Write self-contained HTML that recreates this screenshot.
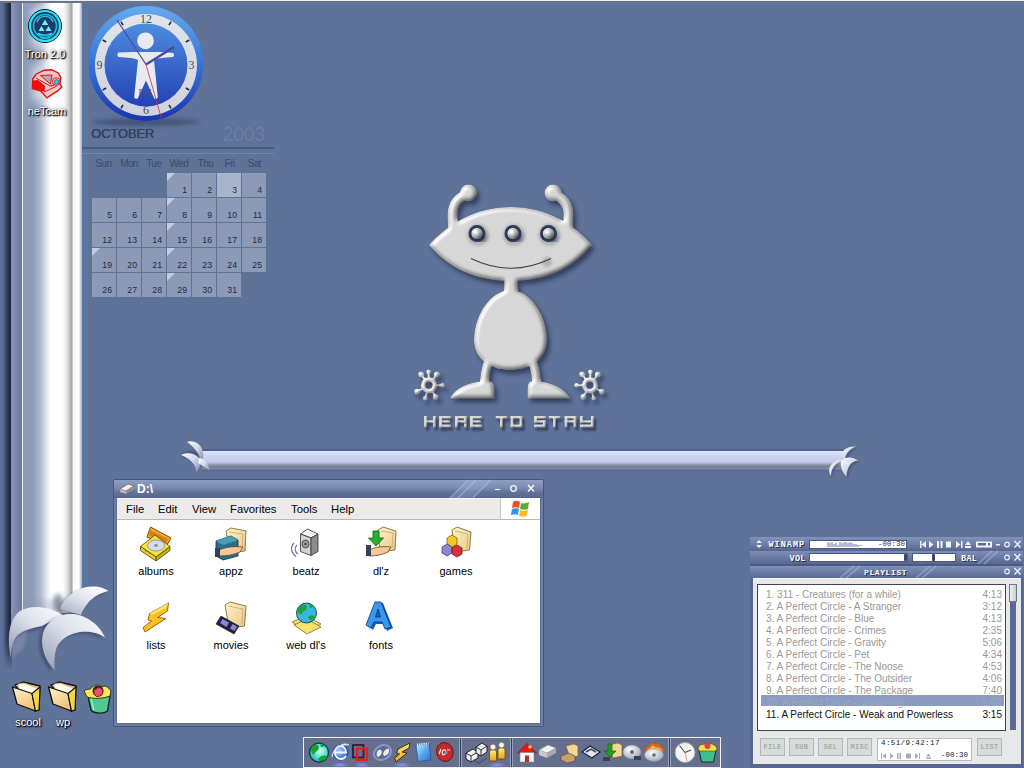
<!DOCTYPE html>
<html><head><meta charset="utf-8"><style>
*{margin:0;padding:0;box-sizing:border-box}
html,body{width:1024px;height:768px;overflow:hidden}
body{background:#5f7298;font-family:"Liberation Sans",sans-serif;position:relative}
.a{position:absolute}
</style></head><body>
<!-- left bar -->
<div class="a" style="left:0;top:1px;width:12px;height:640px;background:linear-gradient(90deg,#5f749c 0,#5a6c94 3px,#2a3450 8px,#1c2438 11px)"></div>
<div class="a" style="left:0;top:640px;width:12px;height:30px;background:linear-gradient(90deg,#5f749c 0,#5a6c94 3px,#2a3450 8px,#1c2438 11px);-webkit-mask-image:linear-gradient(#000,transparent)"></div>
<div class="a" style="left:11px;top:1px;width:11px;height:625px;background:linear-gradient(90deg,#8c94b4,#6a78a0)"></div>
<div class="a" style="left:22px;top:1px;width:1px;height:612px;background:#e8f4ff"></div>
<div class="a" style="left:23px;top:1px;width:59px;height:612px;background:linear-gradient(90deg,#8a9cb8 0,#8e9eba 10px,#b4bcd0 18px,#e4e8f0 24px,#ffffff 28px,#ffffff 40px,#d8d8d8 45px,#a0a0a0 49px,#f8f8f8 50px,#ffffff 56px,#c0c0c8 58px,#a8a8b8 59px)"></div>
<!-- top edge -->
<div class="a" style="left:0;top:0;width:1024px;height:1px;background:#eceef4"></div>
<div class="a" style="left:0;top:1px;width:1024px;height:2px;background:#6c7388"></div>
<div class="a" style="left:82px;top:3px;width:942px;height:6px;background:linear-gradient(#5a76a0,#5f7298)"></div>
<div class="a" style="left:82px;top:3px;width:8px;height:600px;background:linear-gradient(90deg,#5878a2,#5f7298)"></div>
<!-- crescents -->
<svg class="a" style="left:0;top:560px" width="120" height="120" viewBox="0 560 120 120">
<defs>
<linearGradient id="cg1" x1="0.9" y1="0" x2="0" y2="0.9"><stop offset="0" stop-color="#f8f9fc"/><stop offset="0.45" stop-color="#dde1ea"/><stop offset="1" stop-color="#98a0b6"/></linearGradient>
<linearGradient id="cg2" x1="0.9" y1="0" x2="0.1" y2="1"><stop offset="0" stop-color="#ffffff"/><stop offset="0.5" stop-color="#dfe3ec"/><stop offset="1" stop-color="#a4acc0"/></linearGradient>
<filter id="cblur" x="-50%" y="-50%" width="200%" height="200%"><feGaussianBlur stdDeviation="2.5"/></filter>
<filter id="cblur2" x="-50%" y="-50%" width="200%" height="200%"><feGaussianBlur stdDeviation="1.5"/></filter>
</defs>
<!-- bar bottom shadow -->
<ellipse cx="58" cy="604" rx="5" ry="10" fill="#404860" opacity="0.6" filter="url(#cblur)"/><rect x="23" y="600" width="59" height="14" fill="#8890a8" opacity="0.25" filter="url(#cblur)"/>
<!-- c2 top right -->
<path d="M63 613 C60 610 60 606 61 606 C64 596 78 587 91 586.5 C99 586 104 588 108.5 591 C100 593 93 597 88 603 C85 607 82 611 81 615 Z" fill="#2a3450" opacity="0.35" filter="url(#cblur2)" transform="translate(-2,2)"/>
<path d="M60 609 C64 597 78 587 91 586.5 C99 586 104 588 108.5 591 C100 593 93 597 88 603 C85 607 82 611 81 615 Z" fill="url(#cg2)"/>
<!-- c1 left -->
<path d="M11 658 C7 640 8 620 20 611 C28 606 44 604 63 615 C55 619 48 623 42 626 C32 628 24 630 18 635 C13 640 11 648 11 658 Z" fill="#2a3450" opacity="0.45" filter="url(#cblur2)" transform="translate(-1,3)"/>
<path d="M11 658 C7 640 8 620 20 611 C28 606 44 604 63 615 C55 619 48 623 42 626 C32 628 24 630 18 635 C13 640 11 648 11 658 Z" fill="url(#cg1)"/>
<path d="M11 645 C14 638 20 632 28 630 L24 648 C18 652 14 656 12 661 Z" fill="#8a94b0" opacity="0.55" filter="url(#cblur2)"/>
<!-- c3 front -->
<path d="M54.7 670 C44 660 40 645 43 633 C47 620 60 613 73 614 C86 615 100 625 105 637.5 C97 632 88 631 80 632 C68 634 60 640 56.5 648 C54 655 54 663 54.7 670 Z" fill="#2a3450" opacity="0.5" filter="url(#cblur2)" transform="translate(-3,2)"/>
<path d="M54.7 670 C44 660 40 645 43 633 C47 620 60 613 73 614 C86 615 100 625 105 637.5 C97 632 88 631 80 632 C68 634 60 640 56.5 648 C54 655 54 663 54.7 670 Z" fill="url(#cg1)"/>
</svg>
<!-- clock -->
<svg class="a" style="left:80px;top:0" width="140" height="130" viewBox="80 0 140 130">
<defs>
<linearGradient id="clkout" x1="0" y1="0" x2="0" y2="1"><stop offset="0" stop-color="#64aaf0"/><stop offset="0.45" stop-color="#3a7ad8"/><stop offset="1" stop-color="#1a34b0"/></linearGradient>
<linearGradient id="clkin" x1="0" y1="0" x2="0" y2="1"><stop offset="0" stop-color="#4e8cde"/><stop offset="1" stop-color="#2442b6"/></linearGradient>
<linearGradient id="clkring" x1="0" y1="0" x2="0" y2="1"><stop offset="0" stop-color="#e2e4ec"/><stop offset="1" stop-color="#cfd2dc"/></linearGradient>
<filter id="shblur" x="-20%" y="-200%" width="140%" height="500%"><feGaussianBlur stdDeviation="2.2"/></filter>
</defs>
<ellipse cx="146" cy="122" rx="54" ry="3.5" fill="#2c3a5c" opacity="0.55" filter="url(#shblur)"/>
<circle cx="146" cy="63.5" r="57.5" fill="url(#clkout)"/>
<circle cx="146" cy="65" r="51" fill="url(#clkring)"/>
<circle cx="146" cy="65" r="41.5" fill="url(#clkin)"/>
<g stroke="#28283a" stroke-width="1.6">
<line x1="171" y1="21.7" x2="169" y2="25.2"/>
<line x1="189.3" y1="40" x2="185.8" y2="42"/>
<line x1="189.3" y1="90" x2="185.8" y2="88"/>
<line x1="171" y1="108.3" x2="169" y2="104.8"/>
<line x1="121" y1="108.3" x2="123" y2="104.8"/>
<line x1="102.7" y1="90" x2="106.2" y2="88"/>
<line x1="102.7" y1="40" x2="106.2" y2="42"/>
<line x1="121" y1="21.7" x2="123" y2="25.2"/>
</g>
<g font-family="Liberation Serif" font-size="12" fill="#4a4a58" text-anchor="middle">
<text x="146" y="23">12</text>
<text x="191.5" y="69">3</text>
<text x="146" y="114">6</text>
<text x="99.5" y="69">9</text>
</g>
<g fill="#e8eaf2">
<circle cx="145.5" cy="40.8" r="8.4"/>
<path d="M118.5 52.5 C130 51.5 138 52 146 52 C154 52 162 51.5 173 53 C174.5 54 174.5 56 173 57 C164 57.5 158 58 154 60 L157.8 97 C157.8 99 154 99.5 153.8 97.5 L146 80.5 L138.2 97.5 C138 99.5 134.2 99 134.2 97 L138 60 C134 58 128 57.5 118.5 57 C117 56 117 53.5 118.5 52.5 Z"/>
</g>
<text x="145" y="95" font-family="Liberation Serif" font-size="9" fill="#4a4e88" text-anchor="middle">PM</text>
<line x1="146" y1="64.5" x2="174" y2="47" stroke="#4c46a0" stroke-width="2.2"/>
<line x1="146" y1="64.5" x2="117" y2="20" stroke="#4c4c9c" stroke-width="1.3"/>
<line x1="146" y1="64.5" x2="161" y2="117" stroke="#d82848" stroke-width="0.8"/>
</svg>
<!-- calendar -->
<div class="a" style="left:91px;top:125.8px;font-size:12.8px;color:#34405e;text-shadow:0.5px 0 0 #34405e">OCTOBER</div>
<div class="a" style="left:222.5px;top:122.5px;font-size:20px;color:#7080a2;letter-spacing:-0.6px;text-shadow:0 0 1px #52648c">2003</div>
<div class="a" style="left:82px;top:147px;width:192px;height:2px;background:#4a5a7c"></div>
<div class="a" style="left:82px;top:153px;width:192px;height:1px;background:#7484a6"></div>
<div class="a" style="left:88.5px;top:158px;width:30px;text-align:center;font-size:10px;letter-spacing:-0.6px;color:#3c4a6a">Sun</div>
<div class="a" style="left:114px;top:158px;width:30px;text-align:center;font-size:10px;letter-spacing:-0.6px;color:#3c4a6a">Mon</div>
<div class="a" style="left:138.7px;top:158px;width:30px;text-align:center;font-size:10px;letter-spacing:-0.6px;color:#3c4a6a">Tue</div>
<div class="a" style="left:163.9px;top:158px;width:30px;text-align:center;font-size:10px;letter-spacing:-0.6px;color:#3c4a6a">Wed</div>
<div class="a" style="left:190.4px;top:158px;width:30px;text-align:center;font-size:10px;letter-spacing:-0.6px;color:#3c4a6a">Thu</div>
<div class="a" style="left:214.5px;top:158px;width:30px;text-align:center;font-size:10px;letter-spacing:-0.6px;color:#3c4a6a">Fri</div>
<div class="a" style="left:239.4px;top:158px;width:30px;text-align:center;font-size:10px;letter-spacing:-0.6px;color:#3c4a6a">Sat</div>
<div class="a" style="left:167px;top:173px;width:24px;height:24px;background:#8c9ab8"><div class="a" style="left:0;top:0;width:0;height:0;border-top:8px solid #c4cce0;border-right:8px solid transparent"></div><div class="a" style="right:4px;top:11.5px;font-size:8.7px;color:#1f2a40">1</div></div>
<div class="a" style="left:192px;top:173px;width:24px;height:24px;background:#8c9ab8"><div class="a" style="right:4px;top:11.5px;font-size:8.7px;color:#1f2a40">2</div></div>
<div class="a" style="left:217px;top:173px;width:24px;height:24px;background:#a8b4ca"><div class="a" style="right:4px;top:11.5px;font-size:8.7px;color:#1f2a40">3</div></div>
<div class="a" style="left:242px;top:173px;width:24px;height:24px;background:#8c9ab8"><div class="a" style="right:4px;top:11.5px;font-size:8.7px;color:#1f2a40">4</div></div>
<div class="a" style="left:92px;top:198px;width:24px;height:24px;background:#8c9ab8"><div class="a" style="right:4px;top:11.5px;font-size:8.7px;color:#1f2a40">5</div></div>
<div class="a" style="left:117px;top:198px;width:24px;height:24px;background:#8c9ab8"><div class="a" style="right:4px;top:11.5px;font-size:8.7px;color:#1f2a40">6</div></div>
<div class="a" style="left:142px;top:198px;width:24px;height:24px;background:#8c9ab8"><div class="a" style="right:4px;top:11.5px;font-size:8.7px;color:#1f2a40">7</div></div>
<div class="a" style="left:167px;top:198px;width:24px;height:24px;background:#8c9ab8"><div class="a" style="left:0;top:0;width:0;height:0;border-top:8px solid #c4cce0;border-right:8px solid transparent"></div><div class="a" style="right:4px;top:11.5px;font-size:8.7px;color:#1f2a40">8</div></div>
<div class="a" style="left:192px;top:198px;width:24px;height:24px;background:#8c9ab8"><div class="a" style="right:4px;top:11.5px;font-size:8.7px;color:#1f2a40">9</div></div>
<div class="a" style="left:217px;top:198px;width:24px;height:24px;background:#8c9ab8"><div class="a" style="right:4px;top:11.5px;font-size:8.7px;color:#1f2a40">10</div></div>
<div class="a" style="left:242px;top:198px;width:24px;height:24px;background:#8c9ab8"><div class="a" style="right:4px;top:11.5px;font-size:8.7px;color:#1f2a40">11</div></div>
<div class="a" style="left:92px;top:223px;width:24px;height:24px;background:#8c9ab8"><div class="a" style="right:4px;top:11.5px;font-size:8.7px;color:#1f2a40">12</div></div>
<div class="a" style="left:117px;top:223px;width:24px;height:24px;background:#8c9ab8"><div class="a" style="right:4px;top:11.5px;font-size:8.7px;color:#1f2a40">13</div></div>
<div class="a" style="left:142px;top:223px;width:24px;height:24px;background:#8c9ab8"><div class="a" style="right:4px;top:11.5px;font-size:8.7px;color:#1f2a40">14</div></div>
<div class="a" style="left:167px;top:223px;width:24px;height:24px;background:#8c9ab8"><div class="a" style="left:0;top:0;width:0;height:0;border-top:8px solid #c4cce0;border-right:8px solid transparent"></div><div class="a" style="right:4px;top:11.5px;font-size:8.7px;color:#1f2a40">15</div></div>
<div class="a" style="left:192px;top:223px;width:24px;height:24px;background:#8c9ab8"><div class="a" style="right:4px;top:11.5px;font-size:8.7px;color:#1f2a40">16</div></div>
<div class="a" style="left:217px;top:223px;width:24px;height:24px;background:#8c9ab8"><div class="a" style="right:4px;top:11.5px;font-size:8.7px;color:#1f2a40">17</div></div>
<div class="a" style="left:242px;top:223px;width:24px;height:24px;background:#8c9ab8"><div class="a" style="right:4px;top:11.5px;font-size:8.7px;color:#1f2a40">18</div></div>
<div class="a" style="left:92px;top:248px;width:24px;height:24px;background:#8c9ab8"><div class="a" style="left:0;top:0;width:0;height:0;border-top:8px solid #c4cce0;border-right:8px solid transparent"></div><div class="a" style="right:4px;top:11.5px;font-size:8.7px;color:#1f2a40">19</div></div>
<div class="a" style="left:117px;top:248px;width:24px;height:24px;background:#8c9ab8"><div class="a" style="right:4px;top:11.5px;font-size:8.7px;color:#1f2a40">20</div></div>
<div class="a" style="left:142px;top:248px;width:24px;height:24px;background:#8c9ab8"><div class="a" style="right:4px;top:11.5px;font-size:8.7px;color:#1f2a40">21</div></div>
<div class="a" style="left:167px;top:248px;width:24px;height:24px;background:#8c9ab8"><div class="a" style="left:0;top:0;width:0;height:0;border-top:8px solid #c4cce0;border-right:8px solid transparent"></div><div class="a" style="right:4px;top:11.5px;font-size:8.7px;color:#1f2a40">22</div></div>
<div class="a" style="left:192px;top:248px;width:24px;height:24px;background:#8c9ab8"><div class="a" style="right:4px;top:11.5px;font-size:8.7px;color:#1f2a40">23</div></div>
<div class="a" style="left:217px;top:248px;width:24px;height:24px;background:#8c9ab8"><div class="a" style="right:4px;top:11.5px;font-size:8.7px;color:#1f2a40">24</div></div>
<div class="a" style="left:242px;top:248px;width:24px;height:24px;background:#8c9ab8"><div class="a" style="right:4px;top:11.5px;font-size:8.7px;color:#1f2a40">25</div></div>
<div class="a" style="left:92px;top:273px;width:24px;height:24px;background:#8c9ab8"><div class="a" style="right:4px;top:11.5px;font-size:8.7px;color:#1f2a40">26</div></div>
<div class="a" style="left:117px;top:273px;width:24px;height:24px;background:#8c9ab8"><div class="a" style="right:4px;top:11.5px;font-size:8.7px;color:#1f2a40">27</div></div>
<div class="a" style="left:142px;top:273px;width:24px;height:24px;background:#8c9ab8"><div class="a" style="right:4px;top:11.5px;font-size:8.7px;color:#1f2a40">28</div></div>
<div class="a" style="left:167px;top:273px;width:24px;height:24px;background:#8c9ab8"><div class="a" style="left:0;top:0;width:0;height:0;border-top:8px solid #c4cce0;border-right:8px solid transparent"></div><div class="a" style="right:4px;top:11.5px;font-size:8.7px;color:#1f2a40">29</div></div>
<div class="a" style="left:192px;top:273px;width:24px;height:24px;background:#8c9ab8"><div class="a" style="right:4px;top:11.5px;font-size:8.7px;color:#1f2a40">30</div></div>
<div class="a" style="left:217px;top:273px;width:24px;height:24px;background:#8c9ab8"><div class="a" style="right:4px;top:11.5px;font-size:8.7px;color:#1f2a40">31</div></div>
<!-- alien -->
<svg class="a" style="left:400px;top:170px" width="230" height="270" viewBox="400 170 230 270">
<defs>
<filter id="bev" x="-10%" y="-10%" width="130%" height="130%">
<feGaussianBlur in="SourceAlpha" stdDeviation="2.2" result="b"/>
<feOffset in="b" dx="3" dy="4" result="ob"/>
<feFlood flood-color="#26324e" flood-opacity="0.75"/><feComposite in2="ob" operator="in" result="shadow"/>
<feSpecularLighting in="b" surfaceScale="3" specularConstant="0.55" specularExponent="12" lighting-color="#ffffff" result="spec"><feDistantLight azimuth="225" elevation="45"/></feSpecularLighting>
<feComposite in="spec" in2="SourceAlpha" operator="in" result="so"/>
<feDiffuseLighting in="b" surfaceScale="3" diffuseConstant="1" lighting-color="#ffffff" result="diff"><feDistantLight azimuth="225" elevation="55"/></feDiffuseLighting>
<feComposite in="SourceGraphic" in2="diff" operator="arithmetic" k1="1" k2="0" k3="0" k4="0" result="lit"/>
<feComposite in="lit" in2="SourceAlpha" operator="in" result="lit2"/>
<feComposite in="lit2" in2="so" operator="arithmetic" k1="0" k2="1" k3="0.6" k4="0" result="fin"/>
<feMerge><feMergeNode in="shadow"/><feMergeNode in="fin"/></feMerge>
</filter>
<filter id="bevt" x="-10%" y="-30%" width="130%" height="170%">
<feGaussianBlur in="SourceAlpha" stdDeviation="1" result="b"/>
<feOffset in="b" dx="2" dy="2.5" result="ob"/>
<feFlood flood-color="#26324e" flood-opacity="0.8"/><feComposite in2="ob" operator="in" result="shadow"/>
<feDiffuseLighting in="b" surfaceScale="2" diffuseConstant="1" lighting-color="#ffffff" result="diff"><feDistantLight azimuth="225" elevation="60"/></feDiffuseLighting>
<feComposite in="SourceGraphic" in2="diff" operator="arithmetic" k1="1" k2="0" k3="0" k4="0" result="lit"/>
<feComposite in="lit" in2="SourceAlpha" operator="in" result="lit2"/>
<feMerge><feMergeNode in="shadow"/><feMergeNode in="lit2"/></feMerge>
</filter>
<filter id="sblur" x="-50%" y="-50%" width="200%" height="200%"><feGaussianBlur stdDeviation="1.6"/></filter>
</defs>
<g filter="url(#bev)" fill="#d6d6d6">
<path d="M429 245 C448 224 475 207 511 207 C547 207 574 224 592 245 C574 268 547 281 511 281 C475 281 448 268 429 245 Z"/>
<path d="M453 226 C452 214 451 203 463 196" fill="none" stroke="#d6d6d6" stroke-width="10" stroke-linecap="round"/>
<path d="M568 226 C569 214 570 203 558 196" fill="none" stroke="#d6d6d6" stroke-width="10" stroke-linecap="round"/>
<circle cx="468.5" cy="193" r="8.5"/><circle cx="553" cy="193" r="8.5"/>
<path d="M504.5 275 L517.5 275 L518 292 L504 292 Z"/>
<path d="M510.5 290 C530 290 547 315 547 340 C547 360 530 370 510.5 370 C491 370 474 360 474 340 C474 315 491 290 510.5 290 Z"/>
<path d="M489 360 C485 370 484 380 484 392" fill="none" stroke="#d6d6d6" stroke-width="9"/>
<path d="M532 360 C536 370 537 380 537 392" fill="none" stroke="#d6d6d6" stroke-width="9"/>
<path d="M450 398.5 C455 388 470 381 488 381 C493 381 494.5 385 494.5 390 L494.5 398.5 Z"/>
<path d="M570 398.5 C565 388 550 381 533 381 C528 381 527.5 385 527.5 390 L527.5 398.5 Z"/>
<circle cx="429" cy="385.3" r="5.8" fill="none" stroke="#d6d6d6" stroke-width="4.6"/><line x1="424.9" y1="379.6" x2="421.6" y2="375.2" stroke="#d6d6d6" stroke-width="2"/><circle cx="421.1" cy="374.4" r="2.9"/><line x1="428.8" y1="378.3" x2="428.6" y2="372.8" stroke="#d6d6d6" stroke-width="2"/><circle cx="428.6" cy="371.8" r="2.3"/><line x1="433.1" y1="379.6" x2="436.3" y2="375.1" stroke="#d6d6d6" stroke-width="2"/><circle cx="436.9" cy="374.3" r="2.9"/><line x1="436.0" y1="385.3" x2="441.5" y2="385.3" stroke="#d6d6d6" stroke-width="2"/><circle cx="442.5" cy="385.3" r="2.3"/><line x1="432.5" y1="391.4" x2="435.2" y2="396.1" stroke="#d6d6d6" stroke-width="2"/><circle cx="435.7" cy="397.0" r="2.9"/><line x1="427.1" y1="392.0" x2="425.6" y2="397.3" stroke="#d6d6d6" stroke-width="2"/><circle cx="425.3" cy="398.3" r="2.3"/><line x1="422.8" y1="388.6" x2="418.0" y2="391.2" stroke="#d6d6d6" stroke-width="2"/><circle cx="417.1" cy="391.7" r="2.9"/><circle cx="590" cy="385.3" r="5.8" fill="none" stroke="#d6d6d6" stroke-width="4.6"/><line x1="594.1" y1="379.6" x2="597.4" y2="375.2" stroke="#d6d6d6" stroke-width="2"/><circle cx="597.9" cy="374.4" r="2.9"/><line x1="590.2" y1="378.3" x2="590.4" y2="372.8" stroke="#d6d6d6" stroke-width="2"/><circle cx="590.4" cy="371.8" r="2.3"/><line x1="585.9" y1="379.6" x2="582.7" y2="375.1" stroke="#d6d6d6" stroke-width="2"/><circle cx="582.1" cy="374.3" r="2.9"/><line x1="583.0" y1="385.3" x2="577.5" y2="385.3" stroke="#d6d6d6" stroke-width="2"/><circle cx="576.5" cy="385.3" r="2.3"/><line x1="586.5" y1="391.4" x2="583.8" y2="396.1" stroke="#d6d6d6" stroke-width="2"/><circle cx="583.3" cy="397.0" r="2.9"/><line x1="591.9" y1="392.0" x2="593.4" y2="397.3" stroke="#d6d6d6" stroke-width="2"/><circle cx="593.7" cy="398.3" r="2.3"/><line x1="596.2" y1="388.6" x2="601.0" y2="391.2" stroke="#d6d6d6" stroke-width="2"/><circle cx="601.9" cy="391.7" r="2.9"/>
</g>
<g fill="#9a9a9a" opacity="0.6" filter="url(#sblur)"><circle cx="478" cy="235" r="11"/><circle cx="514" cy="235" r="11"/><circle cx="549.5" cy="235" r="11"/><circle cx="547" cy="262" r="5"/></g>
<g fill="#2e3a58"><circle cx="477" cy="233.5" r="8.5"/><circle cx="513" cy="233.5" r="8.5"/><circle cx="548.5" cy="233.5" r="8.5"/></g>
<g fill="#d8d8d8" filter="url(#bev)"><circle cx="477" cy="233.5" r="5.8"/><circle cx="513" cy="233.5" r="5.8"/><circle cx="548.5" cy="233.5" r="5.8"/></g>
<path d="M471 258.5 Q511 278 551 258.5" fill="none" stroke="#3a4252" stroke-width="1.1"/>
<g fill="#e2e2e2" filter="url(#bevt)"><rect x="424.00" y="416.00" width="3.10" height="11.50"/><rect x="432.90" y="416.00" width="3.10" height="11.50"/><rect x="424.00" y="420.20" width="12.00" height="2.50"/><rect x="439.00" y="416.00" width="3.10" height="11.50"/><rect x="439.00" y="416.00" width="12.00" height="2.50"/><rect x="439.00" y="420.20" width="11.00" height="2.50"/><rect x="439.00" y="424.40" width="12.00" height="3.10"/><rect x="455.00" y="416.00" width="3.10" height="11.50"/><rect x="455.00" y="416.00" width="12.00" height="2.50"/><rect x="463.90" y="416.00" width="3.10" height="6.70"/><rect x="455.00" y="420.20" width="12.00" height="2.50"/><rect x="463.90" y="423.30" width="3.10" height="4.20"/><rect x="470.00" y="416.00" width="3.10" height="11.50"/><rect x="470.00" y="416.00" width="12.00" height="2.50"/><rect x="470.00" y="420.20" width="11.00" height="2.50"/><rect x="470.00" y="424.40" width="12.00" height="3.10"/><rect x="495.50" y="416.00" width="12.00" height="2.50"/><rect x="499.95" y="416.00" width="3.10" height="11.50"/><rect x="510.50" y="416.00" width="12.00" height="2.50"/><rect x="510.50" y="424.40" width="12.00" height="3.10"/><rect x="510.50" y="416.00" width="3.10" height="11.50"/><rect x="519.40" y="416.00" width="3.10" height="11.50"/><rect x="534.00" y="416.00" width="12.00" height="2.50"/><rect x="534.00" y="416.00" width="3.10" height="6.70"/><rect x="534.00" y="420.20" width="12.00" height="2.50"/><rect x="542.90" y="420.20" width="3.10" height="7.30"/><rect x="534.00" y="424.40" width="12.00" height="3.10"/><rect x="548.50" y="416.00" width="12.00" height="2.50"/><rect x="552.95" y="416.00" width="3.10" height="11.50"/><rect x="564.50" y="416.00" width="12.00" height="2.50"/><rect x="564.50" y="416.00" width="3.10" height="11.50"/><rect x="573.40" y="416.00" width="3.10" height="11.50"/><rect x="564.50" y="420.20" width="12.00" height="2.50"/><rect x="580.00" y="416.00" width="3.10" height="6.70"/><rect x="590.90" y="416.00" width="3.10" height="11.50"/><rect x="580.00" y="420.20" width="14.00" height="2.50"/><rect x="580.00" y="424.40" width="14.00" height="3.10"/></g>
</svg>
<!-- horizontal bar -->
<div class="a" style="left:202px;top:449px;width:642px;height:23px;background:linear-gradient(#5a6c94 0,#4c5c82 1px,#4e5e84 1.5px,#dcecfa 2px,#d8e4f6 3px,#d0d8f2 6px,#cad0f0 9px,#c4cae8 13px,#aab2ca 14.5px,#8a92a6 16px,#747c94 18px,#8088a8 19px,#7a86a8 20px,#56688e 21px,#5f7298 23px)"></div>
<svg class="a" style="left:170px;top:435px" width="50" height="45" viewBox="170 435 50 45">
<defs>
<linearGradient id="bcg" x1="0" y1="0" x2="1" y2="1"><stop offset="0" stop-color="#ffffff"/><stop offset="0.5" stop-color="#d0d8ea"/><stop offset="1" stop-color="#7a86a4"/></linearGradient>
<filter id="bsh"><feGaussianBlur stdDeviation="1.2"/></filter>
</defs>
<path d="M183 457 C188 452 196 450 202 454 C203 460 201 466 199 471 C198 465 194 460 183 457 Z" fill="#34405e" opacity="0.5" filter="url(#bsh)" transform="translate(-2,-1)"/>
<path d="M187 442 C192 440 198 442 201 447 C204 452 204 458 201 462 C200 456 196 448 187 442 Z" fill="url(#bcg)"/>
<path d="M181 455 C187 452 195 453 199 458 C202 463 200 469 196 472 C196 465 191 459 181 455 Z" fill="url(#bcg)"/>
<path d="M199 458 C205 459 209 464 210 471 C206 468 202 465 198 463 Z" fill="url(#bcg)"/>
</svg>
<svg class="a" style="left:820px;top:435px" width="50" height="45" viewBox="820 435 50 45">
<defs><filter id="bsh2" x="-50%" y="-50%" width="200%" height="200%"><feGaussianBlur stdDeviation="1.3"/></filter></defs>
<g fill="#2c3858" opacity="0.45" filter="url(#bsh2)" transform="translate(1.5,1.5)">
<path d="M842 459 C840 452 845 446 856 446.5 C850 449 846 453 845 459 Z"/>
<path d="M841 461 C846 456 853 457 858 460.5 C851 461 847 467 846.5 477 C842 472 840 466 841 461 Z"/>
<path d="M842 459 C836 459 830 464 829 470 C829 473 830 475 831 476 C831 469 835 463 842 461 Z"/>
</g>
<path d="M842 459 C840 452 845 446 856 446.5 C850 449 846 453 845 459 Z" fill="url(#bcg)"/>
<path d="M842 459 C836 459 830 464 829 470 C829 473 830 475 831 476 C831 469 835 463 842 461 Z" fill="url(#bcg)"/>
<path d="M841 461 C846 456 853 457 858 460.5 C851 461 847 467 846.5 477 C842 472 840 466 841 461 Z" fill="url(#bcg)"/>
</svg>
<!-- explorer window -->
<div class="a" style="left:113px;top:479px;width:431px;height:248px;background:#5e6f96;border:1px solid #46567a;border-radius:2px 2px 0 0;box-shadow:inset -2px -2px 0 #6d7da4,inset 2px 0 0 #6d7da4"></div>
<div class="a" style="left:114px;top:480px;width:429px;height:18px;background:linear-gradient(#90a0c4 0,#8494ba 4px,#7a8ab0 8px,#6b7ba2 10.5px,#5f6f96 13px,#5a6a90 17px,#4e5e84 18px)"></div>
<div class="a" style="left:117px;top:498px;width:423px;height:22px;background:#ecebea;border-top:1px solid #f8fafc;border-bottom:1px solid #b8b8b8"></div>
<div class="a" style="left:500px;top:498px;width:1px;height:22px;background:#c4c4c4"></div>
<div class="a" style="left:501px;top:498px;width:39px;height:22px;background:#ffffff;border-bottom:1px solid #b8b8b8"></div>
<div class="a" style="left:117px;top:520px;width:423px;height:203px;background:#ffffff"></div>
<div class="a" style="left:137px;top:482px;font-size:12px;font-weight:bold;color:#ffffff">D:\</div>
<div class="a" style="left:126px;top:503px;font-size:11.3px;color:#000;word-spacing:0">File</div>
<div class="a" style="left:158px;top:503px;font-size:11.3px;color:#000">Edit</div>
<div class="a" style="left:192px;top:503px;font-size:11.3px;color:#000">View</div>
<div class="a" style="left:230px;top:503px;font-size:11.3px;color:#000">Favorites</div>
<div class="a" style="left:291px;top:503px;font-size:11.3px;color:#000">Tools</div>
<div class="a" style="left:331px;top:503px;font-size:11.3px;color:#000">Help</div>
<!-- explorer details -->
<style>.el{position:absolute;font-size:11px;color:#000;white-space:nowrap;text-align:center;width:70px}</style>
<svg class="a" style="left:118px;top:481px" width="18" height="15" viewBox="0 0 18 15">
<path d="M2 8 L10 3 L16 5 L8 10 Z" fill="#f4f4f4" stroke="#606060" stroke-width="0.7"/>
<path d="M2 8 v3 l6 2 v-3 z" fill="#b8b8b8"/><path d="M8 10 v3 l8 -5 v-3 z" fill="#909090"/>
</svg>
<svg class="a" style="left:440px;top:479px" width="102" height="19" viewBox="440 479 102 19">
<path d="M450 498 L468 480 L491 480 L473 498 Z" fill="#b0c0e4" opacity="0.25"/><g stroke="#b8c8ec" stroke-width="1.2" opacity="0.5"><line x1="450" y1="498" x2="468" y2="480"/><line x1="458" y1="498" x2="476" y2="480"/><line x1="473" y1="498" x2="491" y2="480"/></g>
<path d="M495 489.5 h5" stroke="#f4f6fc" stroke-width="1.1"/>
<circle cx="513.5" cy="488.5" r="2.8" fill="none" stroke="#f4f6fc" stroke-width="1.3"/>
<path d="M528 485 l6 6.5 M534 485 l-6 6.5" stroke="#f4f6fc" stroke-width="1.5"/>
</svg>
<svg class="a" style="left:510px;top:499px" width="22" height="20" viewBox="0 0 22 20">
<path d="M3 3 C6 1 8 2 10 3 L9 9 C7 8 5 8 2 9 Z" fill="#f05020"/>
<path d="M11 4 C14 5 16 4 19 3 L18 10 C16 11 13 11 10 10 Z" fill="#58b030"/>
<path d="M2 10 C5 9 7 9 9 10 L8 16 C6 15 4 15 1 16 Z" fill="#3890e8"/>
<path d="M10 11 C13 12 15 12 18 11 L17 17 C15 18 12 18 9 17 Z" fill="#f8c020"/>
</svg>
<svg class="a" style="left:117px;top:520px" width="423" height="130" viewBox="117 520 423 130">
<defs><linearGradient id="fold" x1="0" y1="0" x2="1" y2="1"><stop offset="0" stop-color="#fff4d0"/><stop offset="1" stop-color="#e8c880"/></linearGradient></defs>
<g stroke-linejoin="round">
<!-- albums -->
<path d="M147 537 L150.5 527 L171 538 L167 545 Z" fill="#f4a828" stroke="#6a4000" stroke-width="0.9"/>
<path d="M150 530 L168 539 L166 543 L148 535 Z" fill="#d88010"/>
<path d="M140.5 546.5 L155 535 L170 546.5 L156 557 Z" fill="#f4e448" stroke="#6a5000" stroke-width="0.9"/>
<ellipse cx="156" cy="545.5" rx="8.5" ry="5.5" fill="#d8dce6" stroke="#7a8094" stroke-width="0.7"/>
<ellipse cx="156" cy="545.5" rx="2" ry="1.4" fill="#8890a0"/>
<path d="M140.5 546.5 L156 557 L156 561 L140.5 550.5 Z" fill="#e0d828" stroke="#6a5000" stroke-width="0.9"/>
<path d="M156 557 L170 546.5 L170 550.5 L156 561 Z" fill="#c8b010" stroke="#6a5000" stroke-width="0.9"/>
<path d="M145 551 h2 M149 553.5 h2" stroke="#908000" stroke-width="1"/>
<!-- appz -->
<path d="M226 531 L231 528 L246 531 L245 551 L230 553 Z" fill="url(#fold)" stroke="#7a5a20" stroke-width="0.8"/>
<path d="M229 532 L243 534 L242 549" fill="none" stroke="#c8a868" stroke-width="0.8"/>
<path d="M216 541 L231 536 L238 540 L238 556 L223 560 L216 556 Z" fill="#287088" stroke="#103040" stroke-width="0.8"/>
<path d="M216 541 L231 536 L238 540 L223 545 Z" fill="#48a0b8"/>
<path d="M219 550 C225 547 234 546 243 547 L240 552 C233 555 226 556 219 556 Z" fill="#f4c898" stroke="#704020" stroke-width="0.8"/>
<rect x="215" y="548" width="5" height="9" fill="#34405a"/>
<!-- beatz -->
<path d="M300.5 534 L307.5 529 L318 534 L311 538 Z" fill="#f0f0f0" stroke="#303030" stroke-width="0.8"/>
<path d="M300.5 534 L311 538 L311 555.5 L300.5 551.5 Z" fill="#d4d4d4" stroke="#303030" stroke-width="0.8"/>
<path d="M311 538 L318 534 L318 551.5 L311 555.5 Z" fill="#8c8c8c" stroke="#303030" stroke-width="0.8"/>
<ellipse cx="305.5" cy="544" rx="3.5" ry="4" fill="#a0a0a0" stroke="#404040" stroke-width="0.9"/>
<circle cx="305.5" cy="544" r="1.2" fill="#404040"/>
<path d="M297 545 C294 548 295 552 298 554 M294 543 C290 547 291 553 296 556.5" fill="none" stroke="#6868b0" stroke-width="1.1"/>
<!-- dl'z -->
<path d="M378 530 L383 527 L396 531 L395 550 L380 552 Z" fill="url(#fold)" stroke="#7a5a20" stroke-width="0.8"/>
<path d="M381 531 L393 533 L392 548" fill="none" stroke="#c8a868" stroke-width="0.8"/>
<path d="M373 531 v7 h-4.5 l7.5 8 l7.5 -8 h-4.5 v-7 z" fill="#28b030" stroke="#106010" stroke-width="0.8"/>
<path d="M369 550 C375 547 383 546 391 547 L388 552 C382 555 375 556 369 556 Z" fill="#f4c898" stroke="#704020" stroke-width="0.8"/>
<rect x="366" y="545" width="5" height="11" fill="#34405a"/>
<!-- games -->
<path d="M452 530 L457 527 L471 532 L469.5 550 L455 552 Z" fill="url(#fold)" stroke="#7a5a20" stroke-width="0.8"/>
<path d="M455 531 L468 534 L467 548" fill="none" stroke="#c8a868" stroke-width="0.8"/>
<path d="M447 538 L452 535 L457 538 L457 544 L452 547 L447 544 Z" fill="#f8c828" stroke="#7a5000" stroke-width="0.7"/>
<path d="M442 547 L447 544 L452 547 L452 553 L447 556 L442 553 Z" fill="#8a88d0" stroke="#303070" stroke-width="0.7"/>
<path d="M452 548 L457 545 L462 548 L462 554 L457 557 L452 554 Z" fill="#d83040" stroke="#601010" stroke-width="0.7"/>
<!-- lists -->
<path d="M168.5 603 L167.5 611 L157.5 617.5 L166 618.5 L145 632 L143 627.5 L151.5 621 L148 620 L149.5 613.5 Z" fill="#f8c020" stroke="#8a5a00" stroke-width="0.9"/>
<path d="M149.5 613.5 L168.5 603 L166 608 L152 615 Z" fill="#ffe070"/>
<!-- movies -->
<path d="M225 605 L230 602 L246 606 L244.5 626 L229 628 Z" fill="url(#fold)" stroke="#7a5a20" stroke-width="0.8"/>
<path d="M228 606 L243 609 L242 624" fill="none" stroke="#c8a868" stroke-width="0.8"/>
<path d="M216 624 L221 616 L239 626 L234 634 Z" fill="#202040" stroke="#101018" stroke-width="0.6"/>
<path d="M220 623 L222.5 619 L229 622.5 L226.5 627 Z M230 628.5 L232.5 624 L237 626.5 L234.5 631 Z" fill="#8888d8"/>
<!-- web dl's -->
<path d="M292 622 L306 616 L321 624 L307 632 Z" fill="#f4e488" stroke="#7a6a10" stroke-width="0.8"/>
<path d="M294 625 L307 619 L321 627 L307 634 Z" fill="#f8e070" stroke="#7a6a10" stroke-width="0.8"/>
<circle cx="306.5" cy="613" r="10" fill="#38b8e0" stroke="#0a4050" stroke-width="0.9"/>
<path d="M298 609 C300 604 306 603 307 607 C307 611 302 611 301 615 C299 614 297 612 298 609 Z M308 617 C311 614 315 615 315 618 C313 621 309 621 308 617Z M309 605 C311 604 313 605 313 607 L310 608 Z" fill="#20a040"/>
<!-- fonts -->
<path d="M368 626 L377 603 L383 603 L393 628 L387 631 L384 624 L376 624 L373 630 Z" fill="#1860c0"/>
<path d="M366 625 L375 602 L381 602 L391 627 L385 629 L382 622 L374 622 L371 628 Z M375.5 617 L380.5 617 L378 609 Z" fill="#3898f0" stroke="#103070" stroke-width="0.8"/>
</g>
</svg>
<div class="el" style="left:121px;top:565px">albums</div>
<div class="el" style="left:196px;top:565px">appz</div>
<div class="el" style="left:271px;top:565px">beatz</div>
<div class="el" style="left:346px;top:565px">dl'z</div>
<div class="el" style="left:421px;top:565px">games</div>
<div class="el" style="left:121px;top:639px">lists</div>
<div class="el" style="left:196px;top:639px">movies</div>
<div class="el" style="left:271px;top:639px">web dl's</div>
<div class="el" style="left:346px;top:639px">fonts</div>
<!-- winamp -->
<style>
.pl{font-size:10px;white-space:nowrap}
.px{font-family:"Liberation Mono",monospace;font-weight:bold;color:#fff;text-shadow:1px 1px 0 #2a3450;white-space:nowrap;line-height:1}
.wbtn{position:absolute;background:#d8dcd8;border:1px solid #b4b8b4;font-family:"Liberation Mono",monospace;font-weight:bold;font-size:7px;color:#a8aca8;text-align:center;line-height:16px;letter-spacing:0.3px}
</style>
<div class="a" style="left:750px;top:537px;width:273px;height:231px;background:#56668e"></div>
<div class="a" style="left:750px;top:537px;width:273px;height:14px;background:linear-gradient(#8292bc,#6c7ca4 55%,#56668e)"></div>
<div class="a" style="left:750px;top:551px;width:273px;height:13px;background:linear-gradient(#7e8eb8,#6878a0 55%,#56668e)"></div>
<div class="a" style="left:750px;top:564px;width:273px;height:2px;background:#4a5a80"></div>
<div class="a" style="left:750px;top:566px;width:273px;height:12px;background:linear-gradient(#8090ba,#6a7aa2 55%,#5a6a92)"></div>
<!-- diagonal stripes -->
<svg class="a" style="left:750px;top:537px" width="274" height="41">
<g stroke="#a8b8dc" stroke-width="2" opacity="0.45">
<line x1="90" y1="41" x2="104" y2="29"/><line x1="96" y1="41" x2="110" y2="29"/>
<line x1="166" y1="41" x2="180" y2="29"/><line x1="172" y1="41" x2="186" y2="29"/>
<line x1="228" y1="27" x2="242" y2="14"/><line x1="234" y1="27" x2="248" y2="14"/>
</g>
</svg>
<!-- row1 -->
<svg class="a" style="left:754px;top:539px" width="10" height="11"><path d="M5 1 L8 4 L2 4 Z M2 6 L8 6 L5 9 Z" fill="#e8ecf4"/></svg>
<div class="a px" style="left:768.5px;top:541.3px;font-size:8.5px;letter-spacing:1px">WINAMP</div>
<div class="a" style="left:809px;top:540px;width:98px;height:9px;background:#fff;border:1px solid #4a5a80"></div>
<svg class="a" style="left:827px;top:541px" width="40" height="7"><path d="M1 1v5M3 2v4M5 1v5M7 3v3M9 2v4M11 4v2M13 1v5M15 2v4M17 1v5M19 1v5M21 2v4M23 1v5M25 2v4M27 3v3M29 3v3M31 4v2M33 4v1M35 4v1" stroke="#6a78a0" stroke-width="1"/></svg>
<div class="a px" style="left:878px;top:540.5px;font-size:7.5px;font-weight:normal;color:#30303c;text-shadow:none;letter-spacing:0">-00:30</div>
<svg class="a" style="left:918px;top:539px" width="106" height="11">
<g fill="#f0f2f8">
<path d="M2 2h1.5v7h-1.5zM8 2v7l-4.5-3.5z"/>
<path d="M11 2v7l4.5-3.5z"/>
<path d="M19 2h2v7h-2zM22.5 2h2v7h-2z"/>
<path d="M28 2.5h5v6h-5z"/>
<path d="M38 2v7l4.5-3.5zM43 2h1.5v7h-1.5z"/>
<path d="M47 6l3-4l3 4zM47 7h6v2h-6z"/>
<path d="M58 2.5h16v6h-16z" fill="#f0f2f8"/>
<path d="M78 5h4v1.5h-4z"/>
</g>
<path d="M60 4h8v2.5h-8zM70 4h2v2.5h-2z" fill="#5a6a92"/>
<circle cx="89" cy="5.5" r="2.3" fill="none" stroke="#f0f2f8" stroke-width="1.2"/>
<path d="M96.5 2l6 6.5M102.5 2l-6 6.5" stroke="#f0f2f8" stroke-width="1.4"/>
</svg>
<!-- row2 -->
<div class="a px" style="left:789.5px;top:555.3px;font-size:8.5px;letter-spacing:0.3px">VOL</div>
<div class="a" style="left:809px;top:553px;width:99px;height:9px;background:#fff;border:1px solid #4a5a80"></div>
<div class="a" style="left:904px;top:554px;width:3px;height:7px;background:#3a4868;border-radius:1px"></div>
<div class="a" style="left:912px;top:553px;width:44px;height:9px;background:#fff;border:1px solid #4a5a80"></div>
<div class="a" style="left:932px;top:554px;width:3px;height:7px;background:#3a4868;border-radius:1px"></div>
<div class="a px" style="left:961px;top:555.3px;font-size:8.5px;letter-spacing:0.3px">BAL</div>
<svg class="a" style="left:1000px;top:552px" width="24" height="11"><circle cx="7" cy="5.5" r="2.3" fill="none" stroke="#f0f2f8" stroke-width="1.2"/><path d="M14.5 2l6 6.5M20.5 2l-6 6.5" stroke="#f0f2f8" stroke-width="1.4"/></svg>
<!-- row3 -->
<div class="a px" style="left:864px;top:569px;font-size:8px;letter-spacing:0.6px">PLAYLIST</div>
<svg class="a" style="left:1000px;top:566px" width="24" height="11"><circle cx="7" cy="5.5" r="2.3" fill="none" stroke="#f0f2f8" stroke-width="1.2"/><path d="M14.5 2l6 6.5M20.5 2l-6 6.5" stroke="#f0f2f8" stroke-width="1.4"/></svg>
<!-- body -->
<div class="a" style="left:753px;top:578px;width:268px;height:186px;background:#e6e8ea;border-top:1px solid #f4f6f8"></div>
<div class="a" style="left:757px;top:584px;width:249px;height:147px;background:#fff;border:1px solid #3c4454"></div>
<div class="a" style="left:761px;top:695px;width:243px;height:11px;background:#8a9cc0"></div>
<div class="a" style="left:1010px;top:585px;width:6px;height:145px;background:#5a6a94"></div>
<div class="a" style="left:1009px;top:584px;width:8px;height:18px;background:linear-gradient(90deg,#f0f0f0,#c8ccd0);border:1px solid #707888"></div>
<div class="a pl" style="left:766px;top:589px;color:#989898">1. 311 - Creatures (for a while)</div><div class="a pl" style="left:952px;width:50px;text-align:right;top:589px;color:#989898">4:13</div>
<div class="a pl" style="left:766px;top:601px;color:#989898">2. A Perfect Circle - A Stranger</div><div class="a pl" style="left:952px;width:50px;text-align:right;top:601px;color:#989898">3:12</div>
<div class="a pl" style="left:766px;top:613px;color:#989898">3. A Perfect Circle - Blue</div><div class="a pl" style="left:952px;width:50px;text-align:right;top:613px;color:#989898">4:13</div>
<div class="a pl" style="left:766px;top:625px;color:#989898">4. A Perfect Circle - Crimes</div><div class="a pl" style="left:952px;width:50px;text-align:right;top:625px;color:#989898">2:35</div>
<div class="a pl" style="left:766px;top:637px;color:#989898">5. A Perfect Circle - Gravity</div><div class="a pl" style="left:952px;width:50px;text-align:right;top:637px;color:#989898">5:06</div>
<div class="a pl" style="left:766px;top:649px;color:#989898">6. A Perfect Circle - Pet</div><div class="a pl" style="left:952px;width:50px;text-align:right;top:649px;color:#989898">4:34</div>
<div class="a pl" style="left:766px;top:661px;color:#989898">7. A Perfect Circle - The Noose</div><div class="a pl" style="left:952px;width:50px;text-align:right;top:661px;color:#989898">4:53</div>
<div class="a pl" style="left:766px;top:673px;color:#989898">8. A Perfect Circle - The Outsider</div><div class="a pl" style="left:952px;width:50px;text-align:right;top:673px;color:#989898">4:06</div>
<div class="a pl" style="left:766px;top:685px;color:#989898">9. A Perfect Circle - The Package</div><div class="a pl" style="left:952px;width:50px;text-align:right;top:685px;color:#989898">7:40</div>
<div class="a pl" style="left:766px;top:697px;color:#9aa6c2">10. A Perfect Circle - Vanishing</div><div class="a pl" style="left:952px;width:50px;text-align:right;top:697px;color:#9aa6c2">5:02</div>
<div class="a pl" style="left:766px;top:709px;color:#101010">11. A Perfect Circle - Weak and Powerless</div><div class="a pl" style="left:952px;width:50px;text-align:right;top:709px;color:#101010">3:15</div>

<div class="wbtn" style="left:760px;top:738px;width:25px;height:18px">FILE</div>
<div class="wbtn" style="left:789px;top:738px;width:25px;height:18px">SUB</div>
<div class="wbtn" style="left:818px;top:738px;width:25px;height:18px">SEL</div>
<div class="wbtn" style="left:847px;top:738px;width:25px;height:18px">MISC</div>
<div class="wbtn" style="left:977px;top:738px;width:25px;height:18px">LIST</div>
<div class="a" style="left:877px;top:738px;width:95px;height:23px;background:#fff;border:1px solid #b8bcc0"></div>
<div class="a px" style="left:881px;top:739.5px;font-size:7.5px;font-weight:normal;color:#202028;text-shadow:none;letter-spacing:0.4px">4:51/9:42:17</div>
<div class="a px" style="left:941px;top:752px;font-size:7.5px;font-weight:normal;color:#202028;text-shadow:none;letter-spacing:0">-00:30</div>
<svg class="a" style="left:880px;top:752px" width="60" height="8"><g fill="#a8acb0">
<path d="M1 1h1v6h-1zM6 1v6l-3.5-3z"/><path d="M10 1v6l3.5-3z"/><path d="M17 1h1.5v6h-1.5zM19.5 1h1.5v6h-1.5z"/><path d="M26 1.5h5v5h-5z"/><path d="M35 1v6l3.5-3zM39 1h1v6h-1z"/><path d="M46 4.5l2.5-3l2.5 3zM46 5.5h5v1.5h-5z"/></g></svg>
<!-- taskbar -->
<div class="a" style="left:303px;top:737px;width:418px;height:31px;background:#636f8c;border:1px solid #eef0f8"></div>
<div class="a" style="left:459px;top:738px;width:1px;height:29px;background:#98a0b8"></div><div class="a" style="left:460px;top:738px;width:1px;height:29px;background:#363e58"></div><div class="a" style="left:461px;top:738px;width:1px;height:29px;background:#98a0b8"></div>
<div class="a" style="left:510px;top:738px;width:1px;height:29px;background:#98a0b8"></div><div class="a" style="left:511px;top:738px;width:1px;height:29px;background:#363e58"></div><div class="a" style="left:512px;top:738px;width:1px;height:29px;background:#98a0b8"></div>
<div class="a" style="left:668px;top:738px;width:1px;height:29px;background:#98a0b8"></div><div class="a" style="left:669px;top:738px;width:1px;height:29px;background:#363e58"></div><div class="a" style="left:670px;top:738px;width:1px;height:29px;background:#98a0b8"></div>
<svg class="a" style="left:303px;top:737px" width="418" height="31" viewBox="303 737 418 31">
<defs>
<radialGradient id="glow"><stop offset="0" stop-color="#8a90ff" stop-opacity="0.95"/><stop offset="1" stop-color="#8a90ff" stop-opacity="0"/></radialGradient>
<radialGradient id="globe" cx="0.55" cy="0.4" r="0.7"><stop offset="0" stop-color="#d0fff8"/><stop offset="0.55" stop-color="#50d8d0"/><stop offset="1" stop-color="#2098a0"/></radialGradient>
<radialGradient id="ieg" cx="0.4" cy="0.35" r="0.7"><stop offset="0" stop-color="#a8d0ff"/><stop offset="1" stop-color="#2060d0"/></radialGradient>
<radialGradient id="cdg" cx="0.4" cy="0.35" r="0.7"><stop offset="0" stop-color="#ffffff"/><stop offset="1" stop-color="#a0a4b0"/></radialGradient>
<linearGradient id="npg" x1="0" y1="0" x2="1" y2="1"><stop offset="0" stop-color="#c8f0ff"/><stop offset="0.5" stop-color="#58a8f0"/><stop offset="1" stop-color="#3070d0"/></linearGradient>
<linearGradient id="yel" x1="0" y1="0" x2="0" y2="1"><stop offset="0" stop-color="#fff080"/><stop offset="1" stop-color="#f0a010"/></linearGradient>
</defs>
<ellipse cx="340" cy="765" rx="9" ry="3" fill="url(#glow)"/>
<ellipse cx="362" cy="765" rx="8" ry="3" fill="url(#glow)"/>
<ellipse cx="402" cy="765" rx="9" ry="3" fill="url(#glow)"/>
<ellipse cx="497" cy="765" rx="9" ry="3" fill="url(#glow)"/>
<!-- globe -->
<circle cx="319" cy="752.6" r="9.5" fill="url(#globe)" stroke="#0c3838" stroke-width="1.3"/>
<path d="M311.5 748 C313 744 318 744 319 747 C319 751 315 751 314 755 C312 754 310.5 751 311.5 748Z M319 758 C322 755 326 755 327 757 C325 761 321 762 318 760Z M320 745 C322 744 324 745 324 747 L321 747Z" fill="#10a828"/>
<!-- IE -->
<circle cx="340.5" cy="752.5" r="7.5" fill="url(#ieg)" stroke="#1a48a8" stroke-width="1"/>
<path d="M335 752.5 h11 C346 748 343 746 340.5 746 C337 746 335 749 335 752.5 C335 756 337.5 759 341 759 C343 759 345 758 346 756" fill="none" stroke="#f0f8ff" stroke-width="1.8"/>
<path d="M332 757 C333 749 341 743 349 745 C347 744 344 744 341 745" fill="none" stroke="#d0e8ff" stroke-width="1.2"/>
<!-- red square -->
<rect x="353" y="745" width="10.5" height="12.5" fill="none" stroke="#2a2038" stroke-width="1.8"/>
<rect x="357" y="748.5" width="10" height="11.5" fill="none" stroke="#f01818" stroke-width="2.2"/>
<!-- R swirl -->
<ellipse cx="382.5" cy="752.5" rx="9" ry="7" fill="none" stroke="#8898c8" stroke-width="2" transform="rotate(-25 382.5 752.5)"/>
<ellipse cx="382.5" cy="752.5" rx="7" ry="5" fill="#586890" opacity="0.6" transform="rotate(-25 382.5 752.5)"/>
<path d="M377 756 C376 752 378 749 381 750 C383 752 381 756 378 757 Z M383 754 C384 750 387 748 389 749 C390 752 388 755 384 756 Z" fill="#e8ecf4"/>
<!-- lightning -->
<path d="M410 743 L409 748 L402 752 L407 753 L396 762 L394.5 758 L399.5 754 L396.5 753 L398 749 Z" fill="url(#yel)" stroke="#302010" stroke-width="0.9" stroke-linejoin="round"/>
<!-- notepad -->
<path d="M416 745 L429 744 L431 760 L418 761.5 Z" fill="url(#npg)" stroke="#2858a0" stroke-width="0.8"/>
<path d="M417 744.5 L428.5 743.5" stroke="#ffffff" stroke-width="1.8" stroke-dasharray="1.2 1"/>
<!-- red cd -->
<ellipse cx="444.8" cy="752" rx="8.3" ry="9.5" fill="#c82828" stroke="#601010" stroke-width="0.8" transform="rotate(-15 444.8 752)"/>
<path d="M439 754 l2 -5 M443 755 C441 752 443 749 445 750 C447 752 445 755 443 755 Z M447 750 h3" stroke="#f8f0f0" stroke-width="1.2" fill="none"/>
<circle cx="446" cy="752.5" r="1.6" fill="#60a0b0"/>
<!-- connectors -->
<path d="M466 753 l7 -4 l5 3 v6 l-7 4 l-5 -3 z" fill="#f0f0f0" stroke="#202028" stroke-width="1"/>
<path d="M471 756 v6 M466 753 l5 3 l7 -4" fill="none" stroke="#202028" stroke-width="0.9"/>
<path d="M476 747 l6 -4 l5 3 v6 l-6 4 l-5 -3 z" fill="#e8e8ec" stroke="#202028" stroke-width="1"/>
<path d="M481 750 v6 M476 747 l5 3 l6 -4" fill="none" stroke="#202028" stroke-width="0.9"/>
<path d="M473 760 l6 3 l8 -5" fill="none" stroke="#404868" stroke-width="1"/>
<!-- people -->
<path d="M489.5 752 C489.5 749 496.5 749 496.5 752 L496.5 761 L489.5 761 Z" fill="url(#yel)" stroke="#604000" stroke-width="0.7"/>
<path d="M498 750 C498 747 505 747 505 750 L505 759 L498 759 Z" fill="url(#yel)" stroke="#604000" stroke-width="0.7"/>
<circle cx="493" cy="747" r="2.8" fill="#f8f8f0" stroke="#806030" stroke-width="0.5"/><circle cx="501.5" cy="745" r="2.8" fill="#f8f8f0" stroke="#806030" stroke-width="0.5"/>
<!-- house -->
<path d="M517.5 753 L527 743.5 L536.5 753 Z" fill="#e81818" stroke="#801010" stroke-width="0.6"/>
<rect x="520" y="752.5" width="14" height="9.5" fill="#f8f8f8" stroke="#808080" stroke-width="0.6"/>
<rect x="525" y="755.5" width="4" height="6.5" fill="#c82828"/>
<circle cx="530" cy="747" r="1.8" fill="#f8c030"/>
<!-- drive -->
<path d="M539 750 l9 -5 l8 3 l-9 5 z" fill="#f4f4f4" stroke="#909090" stroke-width="0.6"/>
<path d="M539 750 v5 l8 3 v-5 z" fill="#c8c8c8"/><path d="M547 753 v5 l9 -5 v-5 z" fill="#a8a8a8"/>
<!-- box folder -->
<path d="M566 746 l8 -2 l4 2 v10 l-8 2 z" fill="#f0d890" stroke="#806020" stroke-width="0.6"/>
<path d="M561 756 l8 -3 l6 3 v5 l-8 2 l-6 -3 z" fill="#c8a070" stroke="#604020" stroke-width="0.6"/>
<!-- cable -->
<path d="M582 752 l8 -6 l10 6 l-8 6 z" fill="#e0e4f0" stroke="#202030" stroke-width="1.2"/>
<path d="M586 752 l5 -3 l5 3" fill="none" stroke="#404060" stroke-width="1.5"/>
<!-- green arrow folder -->
<path d="M609 745 l9 -2 l4 2 v11 l-9 2 z" fill="#f0d890" stroke="#806020" stroke-width="0.6"/>
<path d="M608 744 v7 h-4 l6 6 l6 -6 h-4 v-7 z" fill="#20a020" stroke="#105010" stroke-width="0.6"/>
<rect x="603" y="757" width="7" height="4" fill="#404048"/>
<!-- cd -->
<ellipse cx="632" cy="752" rx="9" ry="7" fill="url(#cdg)" stroke="#8088a0" stroke-width="0.6"/>
<circle cx="632" cy="752" r="2" fill="#606878"/>
<rect x="634" y="756" width="7" height="4" fill="#404048"/>
<!-- flame cd -->
<path d="M645 752 C646 744 650 748 652 742 C654 747 657 742 660 745 C661 748 664 747 664 752 Z" fill="#f06010"/>
<path d="M647 752 C648 747 651 749 653 745 C655 749 658 746 661 749 L662 752 Z" fill="#ffd020"/>
<ellipse cx="654" cy="755" rx="9.5" ry="6.5" fill="url(#cdg)" stroke="#8088a0" stroke-width="0.6"/>
<circle cx="654" cy="755" r="1.8" fill="#606878"/>
<!-- clock -->
<circle cx="685" cy="752.5" r="10" fill="#f4f4f4" stroke="#a0a0b0" stroke-width="1"/>
<path d="M685 752.5 L679.5 745.5 M685 752.5 L691 750" stroke="#505060" stroke-width="1.1"/><path d="M685 752.5 L687 761" stroke="#d06070" stroke-width="0.6"/>
<!-- recycle -->
<path d="M699 750 h17 l-2.5 12 h-12 z" fill="#40c090" stroke="#103020" stroke-width="1"/>
<path d="M698 748 C701 742 705 746 707 743 C710 745 713 742 717 748 L716 751 L699 751 Z" fill="#f0e040" stroke="#504010" stroke-width="0.6"/>
<circle cx="707.5" cy="746" r="3" fill="#e04050"/>
</svg>
<!-- desktop icons -->
<style>
.dl{position:absolute;font-size:11px;color:#fff;text-shadow:1px 1px 1px #000,1px 1px 2px #202020,0 0 3px #505060;white-space:nowrap;text-align:center}
</style>
<div class="a" style="left:31px;top:8px;width:32px;height:38px;background:#f4f6fa;opacity:0.55;filter:blur(3px)"></div>
<div class="a" style="left:31px;top:66px;width:32px;height:34px;background:#f4f6fa;opacity:0.45;filter:blur(3px)"></div>
<svg class="a" style="left:26px;top:6px" width="40" height="40" viewBox="26 6 40 40">
<circle cx="45" cy="26" r="16.5" fill="#1a3c68" stroke="#0a1a28" stroke-width="1"/>
<circle cx="45" cy="26" r="15" fill="none" stroke="#28e0f0" stroke-width="2.2"/>
<circle cx="45" cy="26" r="11.5" fill="none" stroke="#20b8d8" stroke-width="1.6"/>
<path d="M37 22 A8.5 8.5 0 0 1 53 22" fill="none" stroke="#30c8e0" stroke-width="1.4"/>
<path d="M45 19.5 L48.2 25 L41.8 25 Z M41.5 26 L44.5 31 L38.5 31 Z M48.5 26 L51.5 31 L45.5 31 Z" fill="#70f0ff"/>
<path d="M38 33.5 C42 35.5 48 35.5 52 33.5" fill="none" stroke="#30e0f0" stroke-width="1.6"/>
<path d="M40 37.5 C43 38.5 47 38.5 50 37.5" fill="none" stroke="#20c0e0" stroke-width="1.3"/>
</svg>
<div class="dl" style="left:20px;top:48px;width:50px">Tron 2.0</div>
<svg class="a" style="left:28px;top:66px" width="36" height="34" viewBox="28 66 36 34">
<path d="M43.7 70.3 L52 69.8 L58.3 73 L60.9 77.6 L59.9 83.9 L61.9 87 L57.3 91.2 L46.8 97.9 L41.1 91.2 L32.3 88.6 L32.8 78.7 L36.4 74 Z" fill="#f4c4c4" stroke="#e01010" stroke-width="1.4" stroke-linejoin="round"/>
<path d="M32.8 80.5 L38 80 L45 86 L44.5 91.5 L41.1 91.2 L32.3 88.6 Z" fill="#f01010"/>
<path d="M40.5 75.5 L52 75 L50.5 84 Z" fill="#b8a8b0" stroke="#d01818" stroke-width="1"/>
<path d="M36 78 L50 86 L58 84" fill="none" stroke="#d01818" stroke-width="1"/>
<path d="M44 92 L57 86" fill="none" stroke="#d01818" stroke-width="0.9"/>
<circle cx="56.2" cy="81.5" r="3.8" fill="#f8d0d0" stroke="#e01010" stroke-width="1"/>
<circle cx="56.5" cy="81.8" r="2.2" fill="#40d0e0" stroke="#204060" stroke-width="0.7"/>
</svg>
<div class="dl" style="left:21px;top:105px;width:52px">neTcam</div>
<svg class="a" style="left:11px;top:680px" width="32" height="34" viewBox="0 0 32 34">
<defs><linearGradient id="fgr" x1="0" y1="0" x2="0.6" y2="1"><stop offset="0" stop-color="#fff4c8"/><stop offset="1" stop-color="#f0c078"/></linearGradient></defs>
<path d="M4 5 L12 2 L29 6 L28 30 L24 31 Z" fill="#f0c890" stroke="#101010" stroke-width="1.3" stroke-linejoin="round"/>
<path d="M7 4 L13 3 L27 8 L25.5 26 L10 21 Z" fill="#fffbe8" stroke="#a09070" stroke-width="0.5"/>
<path d="M10 4 L15 3.5 L27 9" fill="none" stroke="#c8b890" stroke-width="0.6"/>
<path d="M1.5 7 L21 13.5 L24.5 31 L6 24 Z" fill="url(#fgr)" stroke="#101010" stroke-width="1.3" stroke-linejoin="round"/>
<path d="M21 13.5 L29 7 L28 30 L24.5 31 Z" fill="#f4d448" stroke="#101010" stroke-width="1.1" stroke-linejoin="round"/>
</svg>
<div class="dl" style="left:10px;top:716px;width:36px">scool</div>
<svg class="a" style="left:47px;top:680px" width="32" height="34" viewBox="0 0 32 34">
<defs><linearGradient id="fgr" x1="0" y1="0" x2="0.6" y2="1"><stop offset="0" stop-color="#fff4c8"/><stop offset="1" stop-color="#f0c078"/></linearGradient></defs>
<path d="M4 5 L12 2 L29 6 L28 30 L24 31 Z" fill="#f0c890" stroke="#101010" stroke-width="1.3" stroke-linejoin="round"/>
<path d="M7 4 L13 3 L27 8 L25.5 26 L10 21 Z" fill="#fffbe8" stroke="#a09070" stroke-width="0.5"/>
<path d="M10 4 L15 3.5 L27 9" fill="none" stroke="#c8b890" stroke-width="0.6"/>
<path d="M1.5 7 L21 13.5 L24.5 31 L6 24 Z" fill="url(#fgr)" stroke="#101010" stroke-width="1.3" stroke-linejoin="round"/>
<path d="M21 13.5 L29 7 L28 30 L24.5 31 Z" fill="#f4d448" stroke="#101010" stroke-width="1.1" stroke-linejoin="round"/>
</svg>
<div class="dl" style="left:48px;top:716px;width:30px">wp</div>
<svg class="a" style="left:82px;top:682px" width="32" height="34" viewBox="0 0 32 34">
<path d="M6 14 L28 14 L25.5 29 C22 32 12 32 9 28 Z" fill="#50c890" stroke="#0c2820" stroke-width="1.4" stroke-linejoin="round"/>
<path d="M9 17 L12 28" stroke="#90f0c0" stroke-width="1.5"/>
<path d="M2 9 C5 6 8 9 10 5 C13 3 18 2 20 5 C23 3 26 5 29 9 L28 14 C20 17 12 17 5 15 Z" fill="#f4e860" stroke="#403808" stroke-width="1"/>
<circle cx="16" cy="9" r="5.5" fill="#302830"/>
<path d="M12 8 L17 5 L21 8 L20 13 L15 15 L12 12 Z" fill="#e85070" stroke="#601020" stroke-width="0.7"/>
</svg>
</body></html>
